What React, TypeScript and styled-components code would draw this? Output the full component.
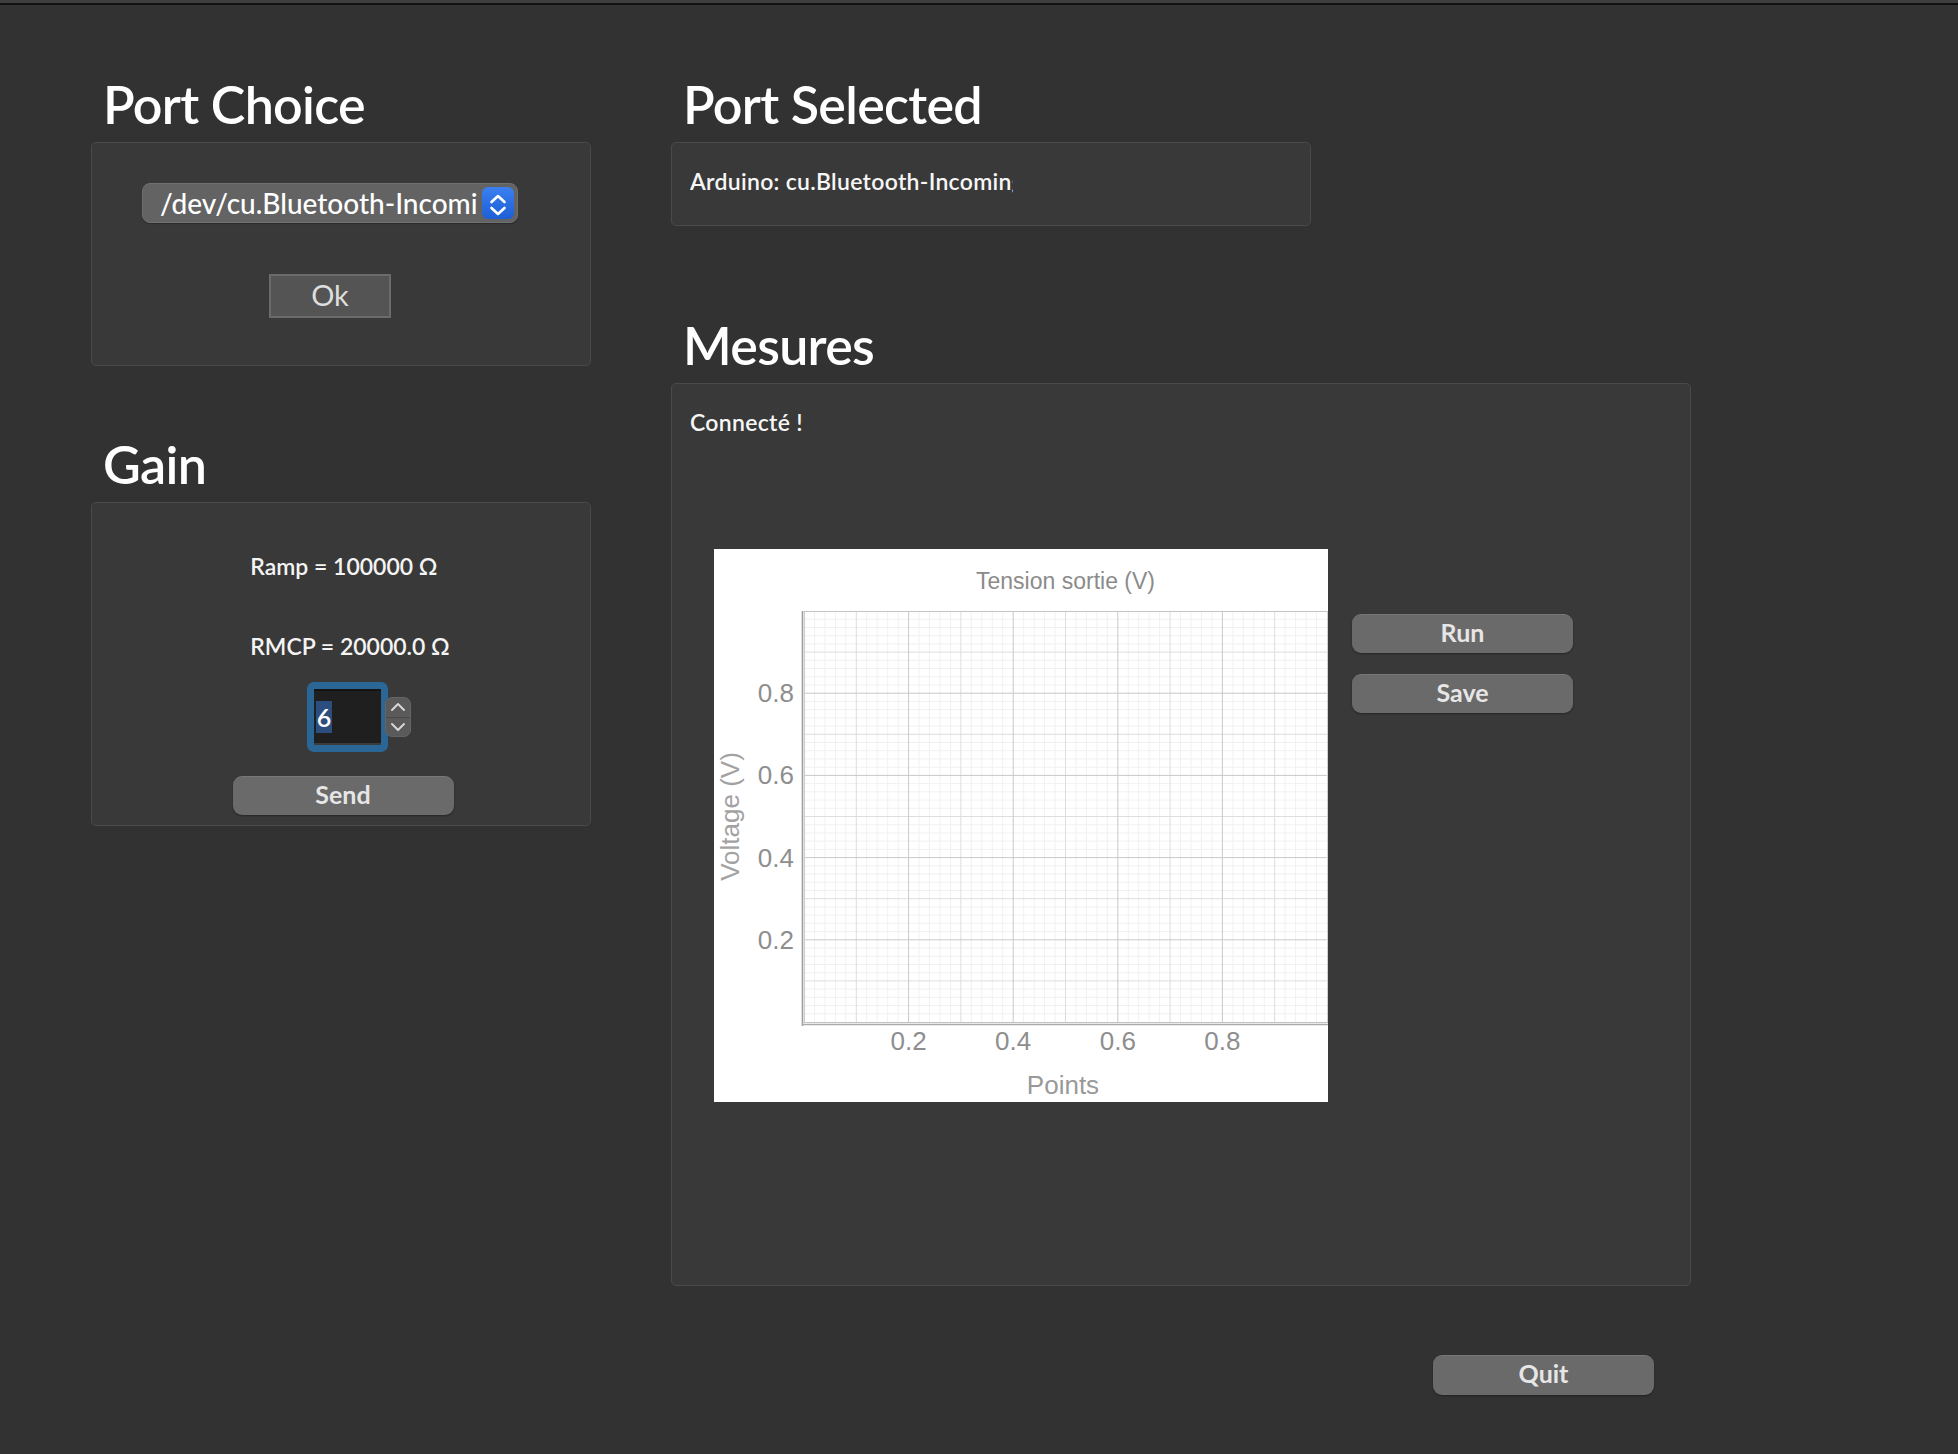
import React from "react";
import styled, { createGlobalStyle } from "styled-components";

const GlobalStyle = createGlobalStyle`
  html, body {
    margin: 0;
    padding: 0;
    background: #323232;
  }
  body {
    font-family: Lato, "Liberation Sans", sans-serif;
  }
`;

const Page = styled.div`
  width: 1958px;
  height: 1454px;
  background: #323232;
  display: flex;
  flex-direction: column;
  overflow: hidden;
`;

const TopEdge = styled.div`
  flex: none;
  height: 3px;
  background: #3e3e3e;
  border-bottom: 2px solid #111111;
`;

const Content = styled.div`
  display: grid;
  grid-template-columns: 500px 1020px;
  column-gap: 80px;
  padding: 67px 0 0 91px;
`;

const Column = styled.div`
  display: flex;
  flex-direction: column;
`;

const Title = styled.h1<{ $top?: number }>`
  margin: ${(p) => p.$top ?? 0}px 0 6px 12px;
  font-family: Lato, "Liberation Sans", sans-serif;
  font-size: 52px;
  line-height: 64px;
  font-weight: 600;
  letter-spacing: -0.7px;
  color: #ffffff;
`;

const Panel = styled.div<{ $h: number }>`
  box-sizing: border-box;
  height: ${(p) => p.$h}px;
  background: #393939;
  border: 1px solid #4a4a4a;
  border-radius: 5px;
`;

const ChoicePanel = styled(Panel)`
  display: flex;
  flex-direction: column;
  align-items: center;
  padding: 40px 22px 0 0;
`;

const SelectBox = styled.div`
  box-sizing: border-box;
  width: 376px;
  height: 40px;
  background: #636363;
  border: 1px solid #707070;
  border-radius: 8px;
  display: flex;
  align-items: center;
  gap: 4px;
  padding: 0 3px 0 17px;
  box-shadow: 0 1px 1px rgba(0, 0, 0, 0.25);
`;

const SelectText = styled.span`
  flex: 1;
  overflow: hidden;
  white-space: nowrap;
  font-size: 28px;
  line-height: 38px;
  font-weight: 500;
  color: #ffffff;
`;

const BlueStepper = styled.div`
  flex: none;
  width: 32px;
  height: 32px;
  border-radius: 6px;
  background: linear-gradient(#3b7ff0, #1d5fd5);
  display: flex;
  align-items: center;
  justify-content: center;
`;

const OkButton = styled.button`
  margin-top: 51px;
  box-sizing: border-box;
  width: 122px;
  height: 44px;
  background: #545454;
  border: 2px solid #6b6b6b;
  border-radius: 0;
  color: #dedede;
  font-family: Lato, "Liberation Sans", sans-serif;
  font-size: 29px;
  font-weight: 400;
  padding: 0 0 3px;
`;

const GainPanel = styled(Panel)`
  display: flex;
  flex-direction: column;
  align-items: center;
  padding: 50px 0 0 8px;
`;

const LabelGroup = styled.div`
  display: flex;
  flex-direction: column;
  align-items: flex-start;
  gap: 54px;
  margin-left: 10px;
`;

const Label = styled.div`
  font-size: 23px;
  line-height: 26px;
  font-weight: 600;
  color: #f4f4f4;
  white-space: nowrap;
`;

const SpinWrap = styled.div`
  position: relative;
  margin: 23px 0 0 5px;
  width: 81px;
  height: 70px;
`;

const SpinRing = styled.div`
  box-sizing: border-box;
  width: 81px;
  height: 70px;
  padding: 7px;
  border-radius: 7px;
  background: #2a6797;
`;

const SpinInput = styled.div`
  box-sizing: border-box;
  width: 67px;
  height: 56px;
  background: #1f1f1f;
  border-top: 2px solid #141414;
  border-bottom: 2px solid #3c3c3c;
  display: flex;
  align-items: center;
  padding-left: 2px;
`;

const Selected = styled.span`
  display: inline-block;
  width: 16px;
  height: 32px;
  background: #2c4e7e;
  color: #ffffff;
  font-size: 25px;
  font-weight: 600;
  line-height: 32px;
  text-align: center;
`;

const SpinStepper = styled.div`
  position: absolute;
  left: 78px;
  top: 15px;
  box-sizing: border-box;
  width: 26px;
  height: 40px;
  border-radius: 7px;
  background: #5a5a5a;
  border: 1px solid #646464;
  display: flex;
  flex-direction: column;
`;

const StepHalf = styled.div<{ $top?: boolean }>`
  flex: 1;
  display: flex;
  align-items: center;
  justify-content: center;
  border-bottom: ${(p) => (p.$top ? "1px solid #4a4a4a" : "none")};
`;

const PushButton = styled.button<{ $h?: number }>`
  box-sizing: border-box;
  width: 221px;
  height: ${(p) => p.$h ?? 39}px;
  flex: none;
  background: #6a6a6a;
  border: none;
  border-top: 1px solid #777777;
  border-radius: 9px;
  box-shadow: 0 1px 2px rgba(0, 0, 0, 0.35);
  color: #e6e6e6;
  font-family: Lato, "Liberation Sans", sans-serif;
  font-size: 25px;
  font-weight: 700;
  padding: 0 0 5px;
`;

const SendButton = styled(PushButton)`
  margin: 24px 4px 0 0;
`;

const SelectedPanel = styled(Panel)`
  width: 640px;
  padding: 25px 18px 0;
`;

const ClipText = styled.div<{ $w: number }>`
  width: ${(p) => p.$w}px;
  overflow: hidden;
  white-space: nowrap;
  font-size: 23px;
  line-height: 26px;
  font-weight: 600;
  letter-spacing: 0.3px;
  color: #f6f6f6;
`;

const MesuresPanel = styled(Panel)`
  padding: 25px 18px 0;
  display: flex;
  flex-direction: column;
`;

const ChartRow = styled.div`
  margin-top: 114px;
  padding-left: 24px;
  display: flex;
  gap: 24px;
`;

const ChartCard = styled.div`
  flex: none;
  width: 614px;
  height: 553px;
  background: #ffffff;
`;

const ButtonColumn = styled.div`
  padding-top: 65px;
  display: flex;
  flex-direction: column;
  gap: 21px;
`;

const Footer = styled.div`
  margin-top: 69px;
  display: flex;
  justify-content: flex-end;
  padding-right: 37px;
`;

const W = 614;
const X0 = 90;
const X1 = 613;
const Y0 = 62;
const Y1 = 473;

function Chart() {
  const cols: React.ReactNode[] = [];
  const layers: [string, (i: number) => boolean][] = [
    ["#f1f1f1", (i) => i % 5 !== 0],
    ["#dddddd", (i) => i % 5 === 0 && i % 10 !== 0],
    ["#c9c9c9", (i) => i % 10 === 0],
  ];
  layers.forEach(([color, test], li) => {
    for (let i = 1; i < 50; i++) {
      if (!test(i)) continue;
      const x = X0 + (i * (X1 - X0)) / 50;
      const y = Y1 - (i * (Y1 - Y0)) / 50;
      cols.push(<line key={`v${li}-${i}`} x1={x} x2={x} y1={Y0} y2={Y1} stroke={color} strokeWidth={1} />);
      cols.push(<line key={`h${li}-${i}`} x1={X0} x2={X1} y1={y} y2={y} stroke={color} strokeWidth={1} />);
    }
  });
  const ticks = [0.2, 0.4, 0.6, 0.8];
  const font = '"Liberation Sans", Arial, sans-serif';
  return (
    <svg width={W} height={553} viewBox={`0 0 ${W} 553`}>
      {cols}
      <line x1={X0} x2={X1} y1={Y0 + 0.5} y2={Y0 + 0.5} stroke="#c4c4c4" />
      <line x1={X1 + 0.5} x2={X1 + 0.5} y1={Y0} y2={Y1} stroke="#d0d0d0" />
      <line x1={X0 + 0.5} x2={X0 + 0.5} y1={Y0} y2={Y1} stroke="#cccccc" />
      <line x1={88.5} x2={88.5} y1={Y0} y2={Y1 + 4} stroke="#9c9c9c" strokeWidth={1.6} />
      <line x1={X0} x2={W} y1={Y1 + 0.5} y2={Y1 + 0.5} stroke="#c0c0c0" />
      <line x1={88} x2={W} y1={Y1 + 2.5} y2={Y1 + 2.5} stroke="#aaaaaa" strokeWidth={1.4} />
      <text x={351.5} y={40} textAnchor="middle" fontFamily={font} fontSize={23} fill="#8b8b8b">
        Tension sortie (V)
      </text>
      {ticks.map((t) => (
        <text key={`y${t}`} x={80} y={Y1 - t * (Y1 - Y0) + 9} textAnchor="end" fontFamily={font} fontSize={26} fill="#8e8e8e">
          {t.toFixed(1)}
        </text>
      ))}
      {ticks.map((t) => (
        <text key={`x${t}`} x={X0 + t * (X1 - X0)} y={501} textAnchor="middle" fontFamily={font} fontSize={26} fill="#8e8e8e">
          {t.toFixed(1)}
        </text>
      ))}
      <text x={349} y={545} textAnchor="middle" fontFamily={font} fontSize={26} fill="#999999">
        Points
      </text>
      <text transform="translate(25 267.5) rotate(-90)" textAnchor="middle" fontFamily={font} fontSize={26} fill="#a2a2a2">
        Voltage (V)
      </text>
    </svg>
  );
}

function UpDown({ stroke, w }: { stroke: string; w: number }) {
  return (
    <svg width="32" height="32" viewBox="0 0 32 32">
      <path d="M9.5 15 L16 9 L22.5 15" fill="none" stroke={stroke} strokeWidth={w} strokeLinecap="round" strokeLinejoin="round" />
      <path d="M9.5 21 L16 27 L22.5 21" fill="none" stroke={stroke} strokeWidth={w} strokeLinecap="round" strokeLinejoin="round" />
    </svg>
  );
}

function Chevron({ up }: { up?: boolean }) {
  return (
    <svg width="16" height="10" viewBox="0 0 16 10">
      <path
        d={up ? "M2 8 L8 2 L14 8" : "M2 2 L8 8 L14 2"}
        fill="none"
        stroke="#d6d6d6"
        strokeWidth={2}
        strokeLinecap="round"
        strokeLinejoin="round"
      />
    </svg>
  );
}

export default function App() {
  return (
    <Page>
      <GlobalStyle />
      <TopEdge />
      <Content>
        <Column>
          <Title>Port Choice</Title>
          <ChoicePanel $h={224}>
            <SelectBox>
              <SelectText>/dev/cu.Bluetooth-Incoming-Port</SelectText>
              <BlueStepper>
                <UpDown stroke="#ffffff" w={2.6} />
              </BlueStepper>
            </SelectBox>
            <OkButton>Ok</OkButton>
          </ChoicePanel>

          <Title $top={66}>Gain</Title>
          <GainPanel $h={324}>
            <LabelGroup>
              <Label>Ramp = 100000 Ω</Label>
              <Label>RMCP = 20000.0 Ω</Label>
            </LabelGroup>
            <SpinWrap>
              <SpinRing>
                <SpinInput>
                  <Selected>6</Selected>
                </SpinInput>
              </SpinRing>
              <SpinStepper>
                <StepHalf $top>
                  <Chevron up />
                </StepHalf>
                <StepHalf>
                  <Chevron />
                </StepHalf>
              </SpinStepper>
            </SpinWrap>
            <SendButton>Send</SendButton>
          </GainPanel>
        </Column>

        <Column>
          <Title>Port Selected</Title>
          <SelectedPanel $h={84}>
            <ClipText $w={323}>Arduino: cu.Bluetooth-Incoming-Port</ClipText>
          </SelectedPanel>

          <Title $top={87}>Mesures</Title>
          <MesuresPanel $h={903}>
            <ClipText $w={400}>Connecté !</ClipText>
            <ChartRow>
              <ChartCard>
                <Chart />
              </ChartCard>
              <ButtonColumn>
                <PushButton>Run</PushButton>
                <PushButton>Save</PushButton>
              </ButtonColumn>
            </ChartRow>
          </MesuresPanel>
          <Footer>
            <PushButton $h={40}>Quit</PushButton>
          </Footer>
        </Column>
      </Content>
    </Page>
  );
}
